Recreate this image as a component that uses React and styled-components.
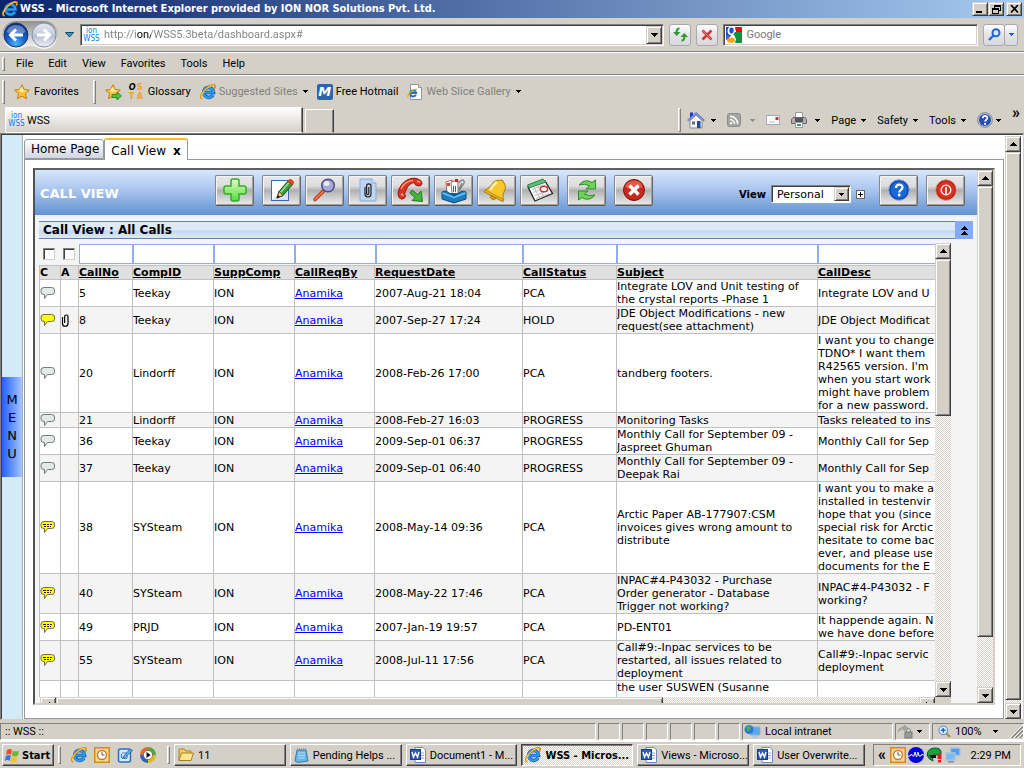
import React from "react";
import styled, { createGlobalStyle, css } from "styled-components";

const ui = `Roboto, "Liberation Sans", sans-serif`;
const uiBold = `"DejaVu Sans Condensed", "DejaVu Sans", sans-serif`;
const web = `"DejaVu Sans", Verdana, sans-serif`;
const face = "#d4d0c8";

const Global = createGlobalStyle`
  *, *::before, *::after { box-sizing: border-box; }
  html, body { margin: 0; height: 100%; }
  body { background: ${face}; font: 11px/13px ${ui}; color: #000; }
  button, input, select { font: inherit; color: inherit; margin: 0; padding: 0; border-radius: 0; }
  button { background: none; border: 0; }
  svg { display: block; flex: none; }
  a { color: inherit; text-decoration: none; }
`;

const raised = css`
  background: ${face};
  border: 1px solid;
  border-color: ${face} #404040 #404040 ${face};
  box-shadow: inset 1px 1px #fff, inset -1px -1px #808080;
`;
const hatch = css`
  background: repeating-conic-gradient(#fff 0 25%, ${face} 0 50%) 0 0 / 2px 2px;
`;

/* ---------- icons ---------- */

const Arrow = ({ dir = "down", color = "#000", size = 7 }) => (
  <svg width={size} height={size} viewBox="0 0 7 7" shapeRendering="crispEdges" aria-hidden="true"
    transform={`rotate(${{ down: 0, up: 180, left: 90, right: 270 }[dir]})`}>
    <path d="M0 2h7v1h-1v1h-1v1h-1v1h-1v-1h-1v-1h-1v-1h-1z" fill={color} />
  </svg>
);
const SmallArrow = ({ color = "#000" }) => (
  <svg width="5" height="3" viewBox="0 0 5 3" shapeRendering="crispEdges" aria-hidden="true">
    <path d="M0 0h5v1h-1v1h-1v1h-1v-1h-1v-1h-1z" fill={color} />
  </svg>
);

const IeLogo = ({ size = 16 }) => (
  <svg width={size} height={size} viewBox="0 0 16 16" aria-hidden="true">
    <path d="M13 10.800a5 5 0 1 1 .6-2.300H4.200" fill="none" stroke="#1458b0" strokeWidth="3.600" />
    <path d="M12.900 10.700a5 5 0 1 1 .5-2.200H4.200" fill="none" stroke="#2c9cec" strokeWidth="2.200" />
    <path d="M2.400 14.800C-.8 14 1.500 8.500 6 4.600 10 1 14.300-.2 15 1.800c.3.900-.2 2-.9 3" fill="none" stroke="#d98f10" strokeWidth="1.800" />
    <path d="M2.200 14.400C.2 13 2.500 8.300 6.300 4.900 9.800 1.800 13.600.3 14.500 2" fill="none" stroke="#ffd84d" strokeWidth="1" />
  </svg>
);

const NavOrbs = () => (
  <svg width="56" height="28" viewBox="0 0 56 28" aria-hidden="true">
    <defs>
      <radialGradient id="orbB" cx=".5" cy=".85" r=".8"><stop offset="0" stopColor="#48b4f4" /><stop offset=".5" stopColor="#1a5fc4" /><stop offset="1" stopColor="#0d2f86" /></radialGradient>
      <linearGradient id="orbG" x2="0" y2="1"><stop offset="0" stopColor="#e4e9f2" /><stop offset=".48" stopColor="#c4cdde" /><stop offset=".5" stopColor="#b0bbd2" /><stop offset="1" stopColor="#eef2f8" /></linearGradient>
      <linearGradient id="pill" x2="0" y2="1"><stop offset="0" stopColor="#8f8f8f" /><stop offset=".5" stopColor="#c9c9c6" /><stop offset="1" stopColor="#f8f8f8" /></linearGradient>
    </defs>
    <path d="M14 0h28a14 14 0 0 1 0 28c-6 0-8-3-14-3s-8 3-14 3a14 14 0 0 1 0-28z" fill="url(#pill)" />
    <circle cx="14" cy="14" r="12" fill="url(#orbB)" stroke="#173a80" />
    <path d="M4.500 11a10 10 0 0 1 19 0c-5 3-14 3-19 0z" fill="#fff" opacity=".35" />
    <path d="M21 14H9m5-5.500L8.500 14l5.500 5.500" fill="none" stroke="#fff" strokeWidth="3" />
    <circle cx="42" cy="14" r="12" fill="url(#orbG)" stroke="#8590a8" />
    <path d="M35 14h12m-5-5.500l5.500 5.500-5.500 5.500" fill="none" stroke="#fff" strokeWidth="3" />
  </svg>
);

const RefreshArrows = () => (
  <svg width="15" height="15" viewBox="0 0 15 15" aria-hidden="true">
    <path d="M6.500 1.500C4 1.500 3.500 3 3.500 6" fill="none" stroke="#2f9a2c" strokeWidth="2" />
    <path d="M0 5h7.500L3.700 9z" fill="#2f9a2c" />
    <path d="M8.500 13.500c2.500 0 3-1.500 3-4.500" fill="none" stroke="#2f9a2c" strokeWidth="2" />
    <path d="M7.500 10H15L11.300 6z" fill="#2f9a2c" />
  </svg>
);
const StopCross = () => (
  <svg width="12" height="12" viewBox="0 0 12 12" aria-hidden="true">
    <path d="M1.500 1.500l9 9m0-9l-9 9" stroke="#c43c3c" strokeWidth="2.600" />
    <path d="M1.500 1.500l9 9" stroke="#e87c7c" strokeWidth="1" />
  </svg>
);
const GoogleMark = () => (
  <svg width="16" height="16" viewBox="0 0 16 16" aria-hidden="true">
    <path d="M9 0h7v5H10z" fill="#e01010" />
    <path d="M9 5h7v11H9l1-4-3-5z" fill="#109040" />
    <path d="M0 0h3v6l3 3H0z" fill="#1048c0" /><path d="M0 8l5 1-1 3-4 1z" fill="#3a68d0" />
    <ellipse cx="5" cy="4" rx="3.500" ry="4" fill="#fff" /><ellipse cx="5.500" cy="3.500" rx="2.200" ry="3" fill="#1a50d0" />
    <path d="M6 7l3 2-2 3-4-1z" fill="#fff" />
    <ellipse cx="5" cy="13.200" rx="4" ry="2.600" fill="#f8a810" />
  </svg>
);
const BlueLens = () => (
  <svg width="13" height="13" viewBox="0 0 13 13" aria-hidden="true">
    <circle cx="8" cy="4.700" r="3.500" fill="#d8e8fc" stroke="#2268d0" strokeWidth="2" />
    <path d="M5.500 7.500L1 12" stroke="#2268d0" strokeWidth="2.400" />
  </svg>
);
const Star = ({ add }) => (
  <svg width="17" height="16" viewBox="0 0 17 16" aria-hidden="true">
    <path d="M8 .8l2.200 4.700 5.100.6-3.800 3.500 1 5.100L8 12.200l-4.500 2.500 1-5.100L.7 6.100l5.100-.6z" fill="#fdc13a" stroke="#c47a10" />
    <path d="M8 2.500l1.500 3.700 4 .5L8 8 4.500 7z" fill="#ffeb9a" />
    {add && <path d="M7 10.500h5V8l4.500 4-4.500 4v-2.500H7z" fill="#52c048" stroke="#1e7f1c" strokeWidth=".8" />}
  </svg>
);
const PageE = () => (
  <svg width="16" height="16" viewBox="0 0 16 16" aria-hidden="true">
    <path d="M3.500.5h8l3 3v12h-11z" fill="#fff" stroke="#9090a0" />
    <path d="M11.500.5v3h3" fill="#ddd" stroke="#9090a0" />
    <path d="M8.800 10.800a3 3 0 1 1 .3-1.900H3" fill="none" stroke="#1c72cc" strokeWidth="2" />
    <path d="M1 13.500C0 11 5 5 10 5" fill="none" stroke="#e8a020" strokeWidth="1.200" />
  </svg>
);
const House = () => (
  <svg width="18" height="17" viewBox="0 0 18 17" aria-hidden="true">
    <path d="M3 8.500L9 3l6 5.500V16H3z" fill="#f4f4f4" stroke="#8a8a92" />
    <path d="M.8 8.800L9 1.300l8.200 7.500" fill="none" stroke="#5a78c8" strokeWidth="2" />
    <path d="M.8 8.800L9 1.300l8.200 7.500" fill="none" stroke="#c8d8f8" strokeWidth=".8" strokeDasharray="1 1" />
    <path d="M3 .5h3V3L3 5.500z" fill="#2038c0" />
    <path d="M10 9h3.500v7H10z" fill="#1c4a9c" /><path d="M5 9.500h3v3H5z" fill="#6a6a70" />
  </svg>
);
const Rss = () => (
  <svg width="14" height="14" viewBox="0 0 14 14" aria-hidden="true">
    <rect x=".5" y=".5" width="13" height="13" rx="2" fill="#a4a4a0" stroke="#8c8c88" />
    <circle cx="4" cy="10.300" r="1.200" fill="#fff" />
    <path d="M3 6.500a4.500 4.500 0 0 1 4.500 4.500M3 3.300a7.700 7.700 0 0 1 7.700 7.700" fill="none" stroke="#fff" strokeWidth="1.400" />
  </svg>
);
const Mail = () => (
  <svg width="14" height="10" viewBox="0 0 14 10" aria-hidden="true">
    <rect x=".5" y=".5" width="13" height="9" fill="#fff" stroke="#a8a8b4" />
    <path d="M9.500 2h3v3h-3z" fill="#d03030" /><path d="M3 7h6" stroke="#b8b8c4" />
  </svg>
);
const Printer = () => (
  <svg width="16" height="16" viewBox="0 0 16 16" aria-hidden="true">
    <path d="M4.500.5h7V6h-7z" fill="#fff" stroke="#9a9a9a" />
    <path d="M2 5.500h12l1.500 2v4H.5v-4z" fill="#b0b0b4" stroke="#66666c" />
    <path d="M4 6h8v4H4z" fill="#55555c" /><path d="M4.500 10.500h7v5h-7z" fill="#fff" stroke="#9a9a9a" />
    <path d="M6 12h2v2H6z" fill="#38a058" /><path d="M8 12h2v2H8z" fill="#3878c8" />
  </svg>
);
const HelpBall = ({ size = 16 }) => (
  <svg width={size} height={size} viewBox="0 0 16 16" aria-hidden="true">
    <circle cx="8" cy="8" r="7.400" fill="#c0c4d0" stroke="#8a8a94" />
    <circle cx="8" cy="8" r="6" fill="#2450b4" />
    <path d="M5.800 6.200c0-3 4.600-3 4.600-.2 0 1.700-2.300 1.700-2.300 3.600" fill="none" stroke="#fff" strokeWidth="1.800" />
    <circle cx="8.100" cy="11.900" r="1.100" fill="#fff" />
  </svg>
);

const Plus = () => (
  <svg width="26" height="26" viewBox="0 0 26 26" aria-hidden="true">
    <defs><linearGradient id="plusFill" x2="0" y2="1"><stop offset="0" stopColor="#e8fbc8" /><stop offset="1" stopColor="#4fdc3c" /></linearGradient></defs>
    <path d="M11 2h4q2 0 2 2v5h5q2 0 2 2v4q0 2-2 2h-5v5q0 2-2 2h-4q-2 0-2-2v-5H4q-2 0-2-2v-4q0-2 2-2h5V4q0-2 2-2z" fill="url(#plusFill)" stroke="#2fae28" strokeWidth="1.500" />
  </svg>
);
const Edit = () => (
  <svg width="26" height="26" viewBox="0 0 26 26" aria-hidden="true">
    <rect x="2.500" y="3.500" width="17" height="20" fill="#fff" stroke="#3c6cb8" />
    <path d="M3 23h16V7z" fill="#d8e4f6" />
    <path d="M8 21l2-6.500L19 4l4.500 3.500L14 18.500z" fill="#3c9c3c" stroke="#174a17" />
    <path d="M11.500 15.500L20 5.500" stroke="#a0e090" strokeWidth="1.500" />
    <path d="M8 21l2-6.500 4 4z" fill="#f4cc80" stroke="#403010" strokeWidth=".8" /><path d="M8 21l.8-3 2 1.800z" fill="#111" />
    <path d="M18.500 4.500Q20.500 1.500 22.500 2.700L24.500 4.500Q25 6.500 23.500 8z" fill="#e84820" stroke="#a82810" strokeWidth=".6" />
  </svg>
);
const Lens = () => (
  <svg width="26" height="26" viewBox="0 0 26 26" aria-hidden="true">
    <path d="M11 14.500L3 22.500" stroke="#b83010" strokeWidth="3.600" strokeLinecap="round" />
    <path d="M11 14.500L3 22.500" stroke="#f88058" strokeWidth="1.600" strokeLinecap="round" />
    <circle cx="16" cy="8.500" r="6.300" fill="#a8a8d8" stroke="#4c4c84" strokeWidth="1.500" />
    <ellipse cx="14.500" cy="6.500" rx="3" ry="2.500" fill="#e8e8fc" />
  </svg>
);
const ClipDoc = () => (
  <svg width="26" height="26" viewBox="0 0 26 26" aria-hidden="true">
    <path d="M5 2h12l4 4v18H5z" fill="#bed4f0" stroke="#88a8d4" /><path d="M17 2v4h4" fill="#e8f0fa" stroke="#88a8d4" />
    <path d="M10 10v7a3 3 0 0 0 6 0V9a2.200 2.200 0 0 0-4.400 0v7.500a1 1 0 0 0 2.200 0V10" fill="none" stroke="#222" strokeWidth="1.200" />
  </svg>
);
const Phone = () => (
  <svg width="28" height="26" viewBox="0 0 28 26" aria-hidden="true">
    <path d="M7.500 17q2 1.500 0 4-3 2.500-5.500-.5Q0 17 2 12 6 3.500 14 1.500q3-1 7 .5 4 1.500 4 4.500-.5 2.500-3 2.500-4 0-5-3.500-5 1-7.500 6.500Q8 15 7.500 17z" fill="#dc3420" stroke="#94180c" />
    <path d="M4 12C6 7 11 3.500 16 3.500" fill="none" stroke="#ff9c84" strokeWidth="1.500" />
    <path d="M4 18q2-2 2 1M20 4.500q2-.5 3 1" fill="none" stroke="#ffb4a0" strokeWidth="1.300" />
    <path d="M15 13l5.500 4.500L24 14l1.500 10.500L15 23.500l3-3-5-4.500z" fill="#42b43c" stroke="#1c7a1a" />
  </svg>
);
const Inbox = () => (
  <svg width="28" height="27" viewBox="0 0 28 27" aria-hidden="true">
    <path d="M6 5l6-2 1 14H7z" fill="#fff" stroke="#a04050" strokeWidth=".8" /><path d="M7 6h3v3H7z" fill="#e03c3c" />
    <path d="M11 5l7-2v14h-6z" fill="#fafaff" stroke="#556" strokeWidth=".8" />
    <path d="M19 6q3-5 5-2 1 2-2 5l-3 5M22 6l-3 6" fill="none" stroke="#777" strokeWidth="1.200" /><path d="M15 2h3v3h-3z" fill="#c22" />
    <path d="M13.500 9v6M15.500 9v6" stroke="#5050c0" strokeWidth="1" />
    <path d="M2 15l4-1 8 5 8-5 4 1v7l-12 4L2 22z" fill="#1c7cc0" stroke="#0c4c80" />
    <path d="M2.500 16L14 20.500 25.500 16" fill="none" stroke="#6cc4f4" strokeWidth="1.500" />
    <path d="M11 17.500l3 2 3-2V16h-6z" fill="#0c5c98" />
  </svg>
);
const Bell = () => (
  <svg width="26" height="26" viewBox="0 0 26 26" aria-hidden="true">
    <g transform="rotate(28 13 13)">
      <path d="M11 3q2-2 4 0 5 2 5 8 .5 5 3.500 7.500v2h-21v-2Q5 16 6 11q0-6 5-8z" fill="#f6c82c" stroke="#b08010" />
      <path d="M9 6q-2 4-2 10" fill="none" stroke="#fff4b0" strokeWidth="2.400" />
      <path d="M3 18.500h20" stroke="#b88810" /><path d="M10 20.500h6q0 3-3 3t-3-3z" fill="#d89a10" stroke="#a07008" strokeWidth=".7" />
    </g>
  </svg>
);
const Calendar = () => (
  <svg width="28" height="26" viewBox="0 0 28 26" aria-hidden="true">
    <path d="M2 10L19 4l7.500 12.500L9 24z" fill="#f8f8f8" stroke="#222" strokeWidth="1.300" />
    <path d="M1.500 8L17 2l3 3L3 11z" fill="#5cc078" stroke="#2c8048" />
    <path d="M6 12.500l11-4.500M7.500 15.500l7-3M9 18.500l13-5M10 21.500l13-5M8 10.500l6 11M12 9l6 11" stroke="#b0b0b0" strokeWidth=".8" />
    <ellipse cx="18" cy="12" rx="3.600" ry="2.800" fill="#fff" stroke="#d03030" strokeWidth="1.400" />
  </svg>
);
const Recycle = () => (
  <svg width="24" height="26" viewBox="0 0 24 26" aria-hidden="true">
    <path d="M4 8Q10 1 17 5.500L20.500 3v9H11l3.500-3Q10 6 4 8z" fill="#6cd458" stroke="#2c8c28" />
    <path d="M20 18q-6 7-13 2.500L3.500 23v-9H13l-3.500 3q4.500 3 10.500 1z" fill="#6cd458" stroke="#2c8c28" />
  </svg>
);
const CancelBall = () => (
  <svg width="26" height="26" viewBox="0 0 26 26" aria-hidden="true">
    <circle cx="13" cy="13" r="10.500" fill="#c82820" stroke="#7c100c" />
    <path d="M4 10a9.500 9.500 0 0 1 18 0q-9 5-18 0z" fill="#f07860" opacity=".6" />
    <path d="M8.500 8.500l9 9m0-9l-9 9" stroke="#fff" strokeWidth="3.400" />
  </svg>
);
const BigHelp = () => (
  <svg width="24" height="24" viewBox="0 0 24 24" aria-hidden="true">
    <circle cx="12" cy="12" r="10.300" fill="#0c48a8" stroke="#88a8dc" />
    <circle cx="12" cy="12" r="8.500" fill="#1c68d4" />
    <path d="M9 10c0-4.500 6.500-4.200 6.500-.6 0 2.400-3.300 2.400-3.300 5" fill="none" stroke="#fff" strokeWidth="2.200" />
    <circle cx="12.200" cy="17" r="1.400" fill="#fff" />
  </svg>
);
const Power = () => (
  <svg width="24" height="24" viewBox="0 0 24 24" aria-hidden="true">
    <circle cx="12" cy="12" r="10.300" fill="#b01c10" stroke="#e09080" />
    <circle cx="12" cy="12" r="8.700" fill="#dc3020" />
    <circle cx="12" cy="12" r="4.800" fill="none" stroke="#fff" strokeWidth="1.300" />
    <path d="M12 9v7" stroke="#fff" strokeWidth="1.600" />
  </svg>
);

const Bubble = ({ kind }) => (
  <svg width="15" height="13" viewBox="0 0 15 13" role="img" aria-label="comment">
    <path d="M4 .5h7.500q3 0 3 2.500v2q0 2.500-3 2.500H7.500L4.500 11.500v-4H4Q1 7.500 1 5V3Q1 .5 4 .5z"
      fill={kind === "none" ? "#e8e8e4" : "#ffff00"} stroke={kind === "none" ? "#6c7c80" : "#70704c"} />
    {kind === "lines" && <path d="M3 3.500h3m1 0h2m1 0h2M4 5.500h2m1 0h2m1 0h1" stroke="#222" shapeRendering="crispEdges" />}
  </svg>
);
const Clip = () => (
  <svg width="9" height="13" viewBox="0 0 9 13" role="img" aria-label="attachment">
    <path d="M1.500 3v6.500a2.700 2.700 0 0 0 5.500 0V2.700a1.700 1.700 0 0 0-3.400 0V9" fill="none" stroke="#000" strokeWidth="1.200" />
  </svg>
);
const Collapse = () => (
  <svg width="7" height="9" viewBox="0 0 7 9" shapeRendering="crispEdges" aria-hidden="true">
    <path d="M3 0h1v1h1v1h1v1h1v1H0V3h1V2h1V1h1zM3 5h1v1h1v1h1v1h1v1H0V8h1V7h1V6h1z" fill="#000" />
  </svg>
);

const Globe = () => (
  <svg width="17" height="16" viewBox="0 0 17 16" aria-hidden="true">
    <rect x="6" y="3" width="10" height="8" rx="1" fill="#58a8f0" stroke="#9ab" /><path d="M8 12h6l1 2.500H7z" fill="#b8c8d8" />
    <circle cx="5" cy="5.500" r="4.500" fill="#2c78d8" /><path d="M2 3q4-3 5 1L4 8z" fill="#3cb84c" />
  </svg>
);
const Lock = () => (
  <svg width="16" height="14" viewBox="0 0 16 14" aria-hidden="true">
    <path d="M1 7q1-5 6-5V0l4 3-4 3V4Q3 4 1 7z" fill="#a8a8a4" stroke="#888" strokeWidth=".5" />
    <rect x="8" y="7" width="7" height="6" fill="#9a9a98" stroke="#777" /><path d="M9.500 7V5.500a2 2 0 0 1 4 0V7" fill="none" stroke="#888" />
  </svg>
);
const ZoomLens = () => (
  <svg width="13" height="13" viewBox="0 0 13 13" aria-hidden="true">
    <path d="M8 8l4 4" stroke="#b08850" strokeWidth="2.400" />
    <circle cx="5.300" cy="5.300" r="4.300" fill="#d8ecfc" stroke="#4c88cc" />
    <path d="M3 5.300h4.600M5.300 3v4.600" stroke="#2060c0" strokeWidth="1.400" />
  </svg>
);
const SizeGrip = () => (
  <svg width="13" height="13" viewBox="0 0 13 13" aria-hidden="true">
    <path d="M0 13L13 0M4 13l9-9M8 13l5-5" stroke="#fff" /><path d="M1.500 13L13 1.500M5.500 13L13 5.500M9.500 13L13 9.500" stroke="#808080" strokeWidth="1.300" />
  </svg>
);
const Flag = () => (
  <svg width="17" height="15" viewBox="0 0 17 15" aria-hidden="true">
    <path d="M3 2q3-2 5 0L7 7Q4.500 5 2 7z" fill="#e8502c" /><path d="M9 2.500q3 2 6 0L14 7.500q-3 2-6 0z" fill="#68b830" />
    <path d="M1.800 8q2.500-2 5 0l-1 5q-2.500-2-5 0z" fill="#3c78dc" /><path d="M7.700 8.500q3 2 6 0l-1 5q-3 2-6 0z" fill="#f8c020" />
  </svg>
);
const Outlook = () => (
  <svg width="16" height="16" viewBox="0 0 16 16" aria-hidden="true">
    <rect x=".75" y=".75" width="14.500" height="14.500" fill="#f8d898" stroke="#d88818" strokeWidth="1.500" />
    <circle cx="8" cy="8" r="4.500" fill="#fff" stroke="#c08030" strokeWidth="1.400" /><path d="M8 5v3h2.500" fill="none" stroke="#805020" />
  </svg>
);
const Desk = () => (
  <svg width="16" height="16" viewBox="0 0 16 16" aria-hidden="true">
    <rect x="1.500" y="2" width="12" height="13" rx="2" fill="#d4e8fc" stroke="#2c70bc" strokeWidth="1.500" />
    <path d="M5 6h5M5 11.500h5M4.500 7v4M10 8v3" stroke="#3c80c8" strokeWidth="1.200" /><path d="M6.500 9.500L13 2l2.500 1.500-7 6.500-2.500.8z" fill="#58b0f0" stroke="#205c9c" strokeWidth=".8" />
  </svg>
);
const Player = () => (
  <svg width="16" height="16" viewBox="0 0 16 16" aria-hidden="true">
    <path d="M8 8V0a8 8 0 0 0-8 8z" fill="#e86830" /><path d="M8 8V0a8 8 0 0 1 8 8z" fill="#58a838" />
    <path d="M8 8h8a8 8 0 0 1-8 8z" fill="#e8b820" /><path d="M8 8H0a8 8 0 0 0 8 8z" fill="#2c64c0" />
    <circle cx="8" cy="8" r="4.600" fill="#fff" stroke="#445" strokeWidth=".6" /><path d="M6.500 5l4.200 3-4.200 3z" fill="#112" />
  </svg>
);
const Folder = () => (
  <svg width="16" height="14" viewBox="0 0 16 14" aria-hidden="true">
    <path d="M1 12.500V2q0-1 1-1h4l2 2h5v2" fill="#f4d060" stroke="#a88020" /><path d="M1 12.500L3.500 5H15.500L13 12.500z" fill="#fce890" stroke="#a88020" />
  </svg>
);
const Notepad = () => (
  <svg width="15" height="15" viewBox="0 0 15 15" aria-hidden="true">
    <path d="M3 2h9l2 11-10 1.500L1 13z" fill="#68b4e4" stroke="#387cac" /><path d="M4 5h7M4 7.500h7M4 10h7" stroke="#b8e0f8" />
    <path d="M3 1.500h9" stroke="#888" strokeWidth="2" strokeDasharray="1 1" />
  </svg>
);
const WordIcon = () => (
  <svg width="16" height="16" viewBox="0 0 16 16" aria-hidden="true">
    <path d="M5 .5h8l2.500 2.500v12.500H5z" fill="#fff" stroke="#6c88bc" /><path d="M11 6h3M11 8.500h3M11 11h3" stroke="#88a4d4" />
    <rect x=".5" y="2.500" width="10" height="10" fill="#2c5cb4" stroke="#183c88" />
    <path d="M2 5l1.500 5L5.500 6l2 4L9 5" fill="none" stroke="#fff" strokeWidth="1.400" />
  </svg>
);
const Wave = () => (
  <svg width="16" height="16" viewBox="0 0 16 16" aria-hidden="true">
    <circle cx="8" cy="8" r="8" fill="#0000e8" /><path d="M0 9h2l1.500-2 1 2H6l1-4 1.500 5L10 5l1 4h2l1-2 1 1h1" fill="none" stroke="#f4f490" />
  </svg>
);
const Shield = () => (
  <svg width="17" height="16" viewBox="0 0 17 16" aria-hidden="true">
    <path d="M1 8Q2 1 9 1t6 6l-5 1q-3-1-4 1l1 5Q2 12 1 8z" fill="#1ca038" stroke="#053" /><path d="M3 8h7v3H5z" fill="#111" />
    <path d="M11.500 7h4v5h-4zM12 13h3v2.500h-3z" fill="#d82020" />
  </svg>
);
const Screens = () => (
  <svg width="16" height="16" viewBox="0 0 16 16" aria-hidden="true">
    <rect x="5.500" y="1" width="9.500" height="7.500" fill="#4c9cf0" stroke="#a8c4dc" strokeWidth="1.500" />
    <rect x="1" y="6" width="9" height="7" fill="#78b8f8" stroke="#a8c4dc" strokeWidth="1.500" /><path d="M3 14h6v1.500H3z" fill="#88a" />
  </svg>
);

/* ---------- window chrome ---------- */

const Window = styled.div`
  height: 100vh; min-height: 480px; display: flex; flex-direction: column; overflow: hidden; background: ${face};
`;
const TitleBar = styled.header`
  flex: 0 0 18px; display: flex; align-items: center; gap: 2px; padding: 0 2px; color: #fff;
  background: linear-gradient(90deg, #0a246a, #a6caf0); font: bold 11px/16px ${uiBold};
  h1 { margin: 0; flex: 1; font: inherit; white-space: nowrap; }
`;
const Caption = styled.div`display: flex;`;
const CaptionButton = styled.button`
  ${raised} width: 16px; height: 14px; display: grid; place-items: center;
  &:last-child { margin-left: 2px; }
`;
const NavBar = styled.div`
  flex: 0 0 33px; display: flex; align-items: center; gap: 5px; padding: 0 6px 0 2px;
`;
const OrbButton = styled.button`width: 56px; height: 28px;`;
const RecentButton = styled.button`width: 12px; height: 20px; display: grid; place-items: center;`;
const Field = styled.div`
  display: flex; align-items: center; height: 22px; background: #fff; border: 1px solid;
  border-color: #808080 #fff #fff #808080; box-shadow: inset 1px 1px #404040, inset -1px -1px ${face};
  flex: ${(p) => p.$grow} 1 0; min-width: 0; padding: 2px 1px 2px 2px; gap: 4px;
  input { flex: 1; min-width: 0; border: 0; outline: 0; background: none; color: #777; font: 11px/16px ${ui}; }
  input::placeholder { color: #777; opacity: 1; }
`;
const AddressInput = styled.input.attrs({ "aria-label": "Address" })`
  && {
    background: linear-gradient(90deg, #808080 0 32px, #000 32px 47px, #808080 47px) no-repeat;
    -webkit-background-clip: text; background-clip: text; -webkit-text-fill-color: transparent;
  }
`;
const DropButton = styled.button`${raised} width: 16px; height: 18px; flex: none; display: grid; place-items: center;`;
const SoftButton = styled.button`
  width: ${(p) => p.$w || 22}px; height: 22px; display: grid; place-items: center; flex: none;
  border: 1px solid #a8a8b0; border-radius: 3px; background: linear-gradient(#fdfdfd, #e4e4e8 50%, #d8d8de);
`;
const SearchGroup = styled.div`
  display: flex;
  ${SoftButton} + ${SoftButton} { margin-left: -1px; }
`;
const Rule = styled.div`flex: 0 0 2px; background: linear-gradient(#808080 50%, #fff 50%);`;
const Grip = styled.span`
  flex: none; width: 3px; height: ${(p) => p.$h || 14}px; border: 1px solid; border-color: #fff #808080 #808080 #fff;
`;
const MenuBar = styled.nav`
  flex: 0 0 21px; display: flex; align-items: center; gap: 1px; padding-left: 2px;
  button { padding: 0 7px; line-height: 18px; }
  ${Grip} { margin-right: 3px; }
`;
const LinksBar = styled.nav`flex: 0 0 31px; display: flex; align-items: center; padding-left: 2px;`;
const FavButton = styled.button`
  display: flex; align-items: center; gap: 3px; margin: 0 ${(p) => p.$after}px 0 9px;
`;
const QuickLink = styled.a`
  display: flex; align-items: center; gap: 3px; margin-right: 9px; white-space: nowrap; color: ${(p) => (p.$dim ? "#808080" : "#000")};
  svg:last-child:not(:first-child) { margin-left: 2px; }
`;
const LetterMark = styled.span`
  display: grid; grid-template-columns: 8px 8px; flex: none; width: 16px; font: bold 9px/9px ${uiBold}; color: #f0a030;
  i { color: #000; }
`;
const SiteMark = styled.span`
  flex: none; width: 17px; font: 8px/8px ${uiBold}; color: #0080f0; text-align: center;
  span { display: block; }
`;
const HotMark = styled.span`
  width: 16px; height: 16px; display: grid; place-items: center; background: #2c64b0; border-radius: 2px; color: #fff;
  font: italic bold 13px/16px ${web};
`;
const TabBar = styled.div`flex: 0 0 26px; display: flex; align-items: flex-end; padding: 0 4px 0 5px;`;
const BrowserTab = styled.a`
  flex: 0 1 298px; height: 26px; display: flex; align-items: center; gap: 2px; padding-left: 2px;
  border: 1px solid; border-color: #fff #404040 transparent #fff; box-shadow: inset -1px 0 #808080;
  background: linear-gradient(#fff, ${face});
`;
const NewTab = styled.button`
  width: 29px; height: 24px; margin-left: 2px; border: 1px solid; border-color: #fff #404040 transparent #fff; box-shadow: inset -1px 0 #808080;
`;
const Commands = styled.div`
  margin-left: auto; display: flex; align-items: center; height: 26px; gap: 11px; flex: none;
  ${Grip} { margin-right: -5px; }
`;
const Command = styled.button`
  display: flex; align-items: center; gap: ${(p) => p.$gap || 5}px; white-space: nowrap;
`;
const Overflow = styled.button`align-self: flex-start; font: bold 16px/12px ${ui}; color: #000;`;

/* ---------- page ---------- */

const Viewport = styled.main`
  flex: 1; min-height: 0; display: flex; background: #fff; border: 1px solid; border-color: #808080 ${face} ${face} #808080;
  box-shadow: inset 1px 1px #404040; padding: 2px 2px 0 1px; font: 11px/13px ${web};
`;
const MenuStrip = styled.aside`
  flex: 0 0 21px; display: flex; align-items: center; margin-top: -1px; background: #d2ebf7; border-right: 1px solid #a8b0b4;
`;
const MenuHandle = styled.button`
  width: 20px; height: 100px; background: linear-gradient(90deg, #2060ff, #a8c4ff); font: 13px/18px ${web};
  span { display: block; }
`;
const Page = styled.div`flex: 1; min-width: 0; display: flex; flex-direction: column; padding: 2px 1px 0 1px;`;
const Tabs = styled.div`display: flex; align-items: flex-end; height: 21px; flex: none;`;
const PageTab = styled.a`
  height: ${(p) => (p.$on ? 22 : 20)}px; margin-bottom: ${(p) => (p.$on ? -1 : 0)}px; position: relative;
  display: flex; align-items: center; gap: 7px; padding: 0 ${(p) => (p.$on ? 6 : 4)}px 0 6px; white-space: nowrap; font: 12px/14px ${web};
  border: 1px solid #919b9c; border-bottom-width: ${(p) => (p.$on ? 0 : 1)}px; border-radius: 3px 3px 0 0;
  background: ${(p) => (p.$on ? "#fff" : "linear-gradient(#fff, #d4d4e4)")};
  ${(p) => p.$on && css`border-top: 2px solid #ffb72c; padding-top: 2px;`}
  button { font: bold 12px/12px ${web}; }
`;
const Panel = styled.section`
  flex: 1; min-height: 0; display: flex; border: 1px solid #919b9c; padding: 8px 8px 13px 8px;
`;
const Frame = styled.div`
  flex: 1; min-width: 0; display: flex; border: 2px solid; border-color: #606060 ${face} ${face} #505050; background: #f4f4f4;
`;
const Work = styled.div`flex: 1; min-width: 0; display: flex; flex-direction: column;`;
const Header = styled.div`
  flex: 0 0 47px; display: flex; align-items: center; padding: 0 12px 5px 5px; border-bottom: 2px solid #e8f0fc;
  background: linear-gradient(#d8e7fb, #a8c4ee 45%, #6292d0);
  h2 { flex: 0 0 175px; margin: 0; color: #fff; font: bold 13px/16px ${web}; padding-top: 8px; }
`;
const Tools = styled.div`display: flex; gap: 4px;`;
const ToolButton = styled.button`
  width: 39px; height: 31px; display: grid; place-items: center; border: 1px solid; border-color: #888 #686868 #585858 #888;
  border-radius: 2px; box-shadow: inset 1px 1px #f4f4f4, inset -1px -1px #a0a0a0;
  background: linear-gradient(#e8e8e8, #dcdcdc 35%, #b0b0b0 50%, #c4c4c4 65%, #ececec);
  margin-left: ${(p) => (p.$apart ? 4 : 0)}px;
`;
const ViewPicker = styled.div`
  margin-left: auto; margin-right: 14px; display: flex; align-items: center; gap: 5px; padding-top: 8px;
  label { font: bold 10px/13px ${web}; }
`;
const Select = styled.span`
  display: flex; width: 80px; height: 18px; background: #fff; border: 1px solid; border-color: #808080 #fff #fff #808080;
  box-shadow: inset 1px 1px #404040; padding: 1px;
  select { appearance: none; flex: 1; min-width: 0; border: 0; outline: 0; background: none; padding-left: 4px; font: 11px/13px ${web}; }
  span { ${raised} width: 15px; display: grid; place-items: center; pointer-events: none; }
`;
const PlusBox = styled.button`
  width: 9px; height: 9px; border: 1px solid #666; background: #fff; display: grid; place-items: center;
`;
const Section = styled.div`
  flex: 0 0 18px; margin: 4px 4px 4px 4px; display: flex;
  h3 { flex: 1; margin: 0; padding-left: 4px; font: bold 12px/16px ${web}; border: 1px solid #5c84b4; border-width: 1px 0;
    background: linear-gradient(#e0eaf6, #dce8f6 50%, #c4d8ee 55%, #dce8f4); }
  button { width: 18px; background: #84aaff; display: grid; place-items: center; }
`;
const GridArea = styled.div`flex: 1; min-height: 0; display: flex; margin: 0 26px 0 4px;`;
const GridView = styled.div`flex: 1; min-width: 0; overflow: hidden; padding-top: 1px;`;
const Filters = styled.div`
  display: flex; align-items: center; height: 20px; margin-bottom: 1px;
  input[type="text"] { flex: none; height: 20px; border: 1px solid #8eaee6; background: #fff; outline: 0; }
`;
const Check = styled.input.attrs({ type: "checkbox" })`
  appearance: none; flex: none; width: 12px; height: 12px; background: #fff; border: 1px solid; margin: 0 4px !important;
  border-color: #808080 ${face} ${face} #808080; box-shadow: inset 1px 1px #404040;
`;
const FilterInput = styled.input.attrs({ type: "text" })`width: ${(p) => p.$w}px;`;

const Calls = styled.table`
  table-layout: fixed; border-collapse: collapse; width: 1058px; background: #fff;
  th, td { border: 1px solid #c0c0c0; padding: 0; text-align: left; vertical-align: middle; white-space: pre; overflow: hidden; }
  th { background: #e0e0e0; font: bold 11px/13px ${web}; }
  th a { text-decoration: underline; }
  tbody tr:nth-child(even) td { background: #f4f4f4; }
  td { height: 15px; }
  td a { color: #0000ff; text-decoration: underline; }
  td svg { margin: -4px 0; }
`;
const LastRow = styled.tr`
  && td { height: 66px; vertical-align: top; }
`;

const Bar = styled.div`
  display: flex; flex: none; flex-direction: ${(p) => (p.$row ? "row" : "column")};
  ${(p) => (p.$row ? "height: 16px; flex: 1; min-width: 0;" : "width: 16px;")} ${hatch}
`;
const BarButton = styled.button`${raised} width: 16px; height: 16px; flex: none; display: grid; place-items: center;`;
const Thumb = styled.div`${raised} flex: ${(p) => p.$n} 1 0;`;
const Gap = styled.div`flex: ${(p) => p.$n} 1 0;`;
const Scroll = ({ row, thumb, gap }) => (
  <Bar $row={row}>
    <BarButton aria-label="back"><Arrow dir={row ? "left" : "up"} /></BarButton>
    <Thumb $n={thumb} /><Gap $n={gap} />
    <BarButton aria-label="forward"><Arrow dir={row ? "right" : "down"} /></BarButton>
  </Bar>
);
const CutRow = styled.div`
  flex: 0 0 6px; display: flex; align-items: flex-start; overflow: hidden; margin: 0 26px 0 5px; padding-right: 16px; background: ${face};
`;

/* ---------- bottom bars ---------- */

const StatusBar = styled.footer`
  flex: 0 0 21px; display: flex; gap: 2px; padding-top: 3px; border-bottom: 1px solid #fff;
`;
const Pane = styled.div`
  flex: ${(p) => (p.$w ? `0 0 ${p.$w}px` : "1")}; min-width: 0; height: 17px; display: flex; align-items: center; gap: 4px;
  padding-left: ${(p) => p.$pad || 1}px; border: 1px solid; border-color: #808080 #fff #fff #808080; white-space: nowrap;
`;
const TaskBar = styled.footer`
  flex: 0 0 27px; display: flex; align-items: center; gap: 4px; padding: 0 3px 0 2px; border-top: 1px solid #fff;
`;
const TaskButton = styled.button`
  flex: 1 1 0; min-width: 0; height: 22px; display: flex; align-items: center; gap: 4px; padding: 0 3px; background: ${face};
  border: 1px solid; border-color: #fff #404040 #404040 #fff; box-shadow: inset -1px -1px #808080; white-space: nowrap; overflow: hidden;
  ${(p) => p.$on && css`${hatch} font: bold 11px/13px ${uiBold}; border-color: #404040 #fff #fff #404040; box-shadow: inset 1px 1px #808080;`}
`;
const StartButton = styled(TaskButton)`flex: 0 0 52px; gap: 1px; padding: 0 1px; font: bold 11px/13px ${uiBold};`;
const QuickLaunch = styled.div`display: flex; gap: 7px; padding: 0 7px 0 6px; flex: none; button { display: block; }`;
const Tray = styled.div`
  flex: 0 0 148px; height: 22px; display: flex; align-items: center; gap: 2px; padding: 0 9px 0 4px; margin-left: 4px;
  border: 1px solid; border-color: #808080 #fff #fff #808080;
  time { margin-left: auto; }
  button { font: bold 16px/12px ${ui}; margin-right: 2px; }
`;

/* ---------- data ---------- */

const columns = [
  ["CallNo", 54], ["CompID", 81], ["SuppComp", 81], ["CallReqBy", 80], ["RequestDate", 148],
  ["CallStatus", 94], ["Subject", 201], ["CallDesc", 280],
];
const filterWidths = [54, 81, 81, 81, 147, 94, 201, 280];

const rows = [
  ["none", false, "5", "Teekay", "2007-Aug-21 18:04", "PCA", "Integrate LOV and Unit testing of\nthe crystal reports -Phase 1", "Integrate LOV and U"],
  ["full", true, "8", "Teekay", "2007-Sep-27 17:24", "HOLD", "JDE Object Modifications - new\nrequest(see attachment)", "JDE Object Modificat"],
  ["none", false, "20", "Lindorff", "2008-Feb-26 17:00", "PCA", "tandberg footers.", "I want you to change\nTDNO* I want them\nR42565 version. I'm\nwhen you start work\nmight have problem\nfor a new password."],
  ["none", false, "21", "Lindorff", "2008-Feb-27 16:03", "PROGRESS", "Monitoring Tasks", "Tasks releated to ins"],
  ["none", false, "36", "Teekay", "2009-Sep-01 06:37", "PROGRESS", "Monthly Call for September 09 -\nJaspreet Ghuman", "Monthly Call for Sep"],
  ["none", false, "37", "Teekay", "2009-Sep-01 06:40", "PROGRESS", "Monthly Call for September 09 -\nDeepak Rai", "Monthly Call for Sep"],
  ["lines", false, "38", "SYSteam", "2008-May-14 09:36", "PCA", "Arctic Paper AB-177907:CSM\ninvoices gives wrong amount to\ndistribute", "I want you to make a\ninstalled in testenvir\nhope that you (since\nspecial risk for Arctic\nhesitate to come bac\never, and please use\ndocuments for the E"],
  ["lines", false, "40", "SYSteam", "2008-May-22 17:46", "PCA", "INPAC#4-P43032 - Purchase\nOrder generator - Database\nTrigger not working?", "INPAC#4-P43032 - F\nworking?"],
  ["lines", false, "49", "PRJD", "2007-Jan-19 19:57", "PCA", "PD-ENT01", "It happende again. N\nwe have done before"],
  ["lines", false, "55", "SYSteam", "2008-Jul-11 17:56", "PCA", "Call#9:-Inpac services to be\nrestarted, all issues related to\ndeployment", "Call#9:-Inpac servic\ndeployment"],
];

const tools = [
  ["Add", Plus], ["Edit", Edit, true], ["Search", Lens], ["Attachments", ClipDoc], ["Call", Phone], ["Inbox", Inbox],
  ["Reminder", Bell], ["Calendar", Calendar], ["Refresh", Recycle, true], ["Cancel", CancelBall, true],
];
const tasks = [
  ["11", Folder], ["Pending Helps ...", Notepad], ["Document1 - M...", WordIcon], ["WSS - Micros...", IeLogo, true],
  ["Views - Microso...", WordIcon], ["User Overwrite...", WordIcon],
];

const Favicon = () => <SiteMark aria-hidden="true"><span>ion</span><span>WSS</span></SiteMark>;

export default function App() {
  return (
    <Window>
      <Global />
      <TitleBar>
        <IeLogo />
        <h1>WSS - Microsoft Internet Explorer provided by ION NOR Solutions Pvt. Ltd.</h1>
        <Caption>
          <CaptionButton aria-label="Minimize"><svg width="8" height="8" shapeRendering="crispEdges"><path d="M0 6h6v2H0z" /></svg></CaptionButton>
          <CaptionButton aria-label="Restore"><svg width="9" height="9" shapeRendering="crispEdges"><path d="M2.500 3V.5h6v5H6M2 1.500h7M.5 3.500h5.500v5H.5zM0 4.500h6" fill="none" stroke="#000" /></svg></CaptionButton>
          <CaptionButton aria-label="Close"><svg width="9" height="8"><path d="M1 0l7 7.500M8 0L1 7.500" stroke="#000" strokeWidth="1.700" /></svg></CaptionButton>
        </Caption>
      </TitleBar>
      <NavBar>
        <OrbButton aria-label="Back and forward"><NavOrbs /></OrbButton>
        <RecentButton aria-label="Recent pages"><svg width="9" height="6" viewBox="0 0 9 6"><path d="M.5.5h8L4.500 5z" fill="#28a0d0" stroke="#104868" /></svg></RecentButton>
        <Field $grow={585}>
          <Favicon />
          <AddressInput defaultValue="http://ion/WSS5.3beta/dashboard.aspx#" />
          <DropButton aria-label="Show addresses"><Arrow /></DropButton>
        </Field>
        <SoftButton aria-label="Refresh"><RefreshArrows /></SoftButton>
        <SoftButton aria-label="Stop"><StopCross /></SoftButton>
        <Field $grow={252}>
          <GoogleMark />
          <input aria-label="Search" placeholder="Google" />
        </Field>
        <SearchGroup>
          <SoftButton aria-label="Search"><BlueLens /></SoftButton>
          <SoftButton $w={14} aria-label="Search options"><SmallArrow color="#1060d0" /></SoftButton>
        </SearchGroup>
      </NavBar>
      <Rule />
      <MenuBar>
        <Grip />
        {["File", "Edit", "View", "Favorites", "Tools", "Help"].map((m) => <button key={m}>{m}</button>)}
      </MenuBar>
      <Rule />
      <LinksBar>
        <Grip $h={24} />
        <FavButton $after={14}><Star />Favorites</FavButton>
        <Grip $h={24} />
        <FavButton $after={7} aria-label="Add to favorites"><Star add /></FavButton>
        <QuickLink href="#"><LetterMark aria-hidden="true"><i>O</i><span>S</span><span>T</span><span>A</span></LetterMark>Glossary</QuickLink>
        <QuickLink href="#" $dim><IeLogo />Suggested Sites<SmallArrow /></QuickLink>
        <QuickLink href="#"><HotMark aria-hidden="true">M</HotMark>Free Hotmail</QuickLink>
        <QuickLink href="#" $dim><PageE />Web Slice Gallery<SmallArrow /></QuickLink>
      </LinksBar>
      <TabBar>
        <BrowserTab href="#"><Favicon />WSS</BrowserTab>
        <NewTab aria-label="New tab" />
        <Commands>
          <Grip $h={24} />
          <Command $gap={6} aria-label="Home"><House /><SmallArrow /></Command>
          <Command $gap={9} aria-label="Feeds"><Rss /><SmallArrow color="#909090" /></Command>
          <Command aria-label="Mail"><Mail /></Command>
          <Command $gap={8} aria-label="Print"><Printer /><SmallArrow /></Command>
          <Command>Page<SmallArrow /></Command>
          <Command>Safety<SmallArrow /></Command>
          <Command>Tools<SmallArrow /></Command>
          <Command $gap={3} aria-label="Help"><HelpBall /><SmallArrow /></Command>
          <Overflow aria-label="More">»</Overflow>
        </Commands>
      </TabBar>

      <Viewport>
        <MenuStrip>
          <MenuHandle>{"MENU".split("").map((c) => <span key={c}>{c}</span>)}</MenuHandle>
        </MenuStrip>
        <Page>
          <Tabs>
            <PageTab href="#">Home Page</PageTab>
            <PageTab as="div" $on>Call View <button aria-label="Close tab">x</button></PageTab>
          </Tabs>
          <Panel>
            <Frame>
              <Work>
                <Header>
                  <h2>CALL VIEW</h2>
                  <Tools>
                    {tools.map(([name, Icon, apart]) => <ToolButton key={name} aria-label={name} $apart={apart}><Icon /></ToolButton>)}
                  </Tools>
                  <ViewPicker>
                    <label htmlFor="view">View</label>
                    <Select><select id="view" defaultValue="Personal"><option>Personal</option></select><span><SmallArrow /></span></Select>
                    <PlusBox aria-label="Add view"><svg width="5" height="5" shapeRendering="crispEdges"><path d="M0 2h5v1H0zM2 0h1v5H2z" /></svg></PlusBox>
                  </ViewPicker>
                  <Tools>
                    <ToolButton aria-label="Help"><BigHelp /></ToolButton>
                    <ToolButton aria-label="Log out" $apart><Power /></ToolButton>
                  </Tools>
                </Header>
                <Section>
                  <h3>Call View : All Calls</h3>
                  <button aria-label="Collapse"><Collapse /></button>
                </Section>
                <GridArea>
                  <GridView>
                    <Filters>
                      <Check aria-label="Comments only" /><Check aria-label="Attachments only" />
                      {columns.map(([c], i) => <FilterInput key={c} aria-label={`Filter ${c}`} $w={filterWidths[i]} />)}
                    </Filters>
                    <Calls>
                      <colgroup>
                        <col width="21" /><col width="18" />
                        {columns.map(([c, w]) => <col key={c} width={w} />)}
                      </colgroup>
                      <thead>
                        <tr><th>C</th><th>A</th>{columns.map(([c]) => <th key={c}><a href="#">{c}</a></th>)}</tr>
                      </thead>
                      <tbody>
                        {rows.map(([kind, clip, no, comp, date, status, subject, desc]) => (
                          <tr key={no}>
                            <td><Bubble kind={kind} /></td>
                            <td>{clip && <Clip />}</td>
                            <td>{no}</td><td>{comp}</td><td>ION</td>
                            <td><a href="#">Anamika</a></td>
                            <td>{date}</td><td>{status}</td><td>{subject}</td><td>{desc}</td>
                          </tr>
                        ))}
                        <LastRow>
                          <td /><td /><td /><td /><td /><td /><td /><td />
                          <td>the user SUSWEN (Susanne</td><td />
                        </LastRow>
                      </tbody>
                    </Calls>
                  </GridView>
                  <Scroll thumb={156} gap={266} />
                </GridArea>
                <CutRow><Scroll row thumb={607} gap={257} /></CutRow>
              </Work>
              <Scroll thumb={451} gap={50} />
            </Frame>
          </Panel>
        </Page>
        <Scroll thumb={547} gap={3} />
      </Viewport>

      <StatusBar>
        <Pane $pad={4}>:: WSS ::</Pane>
        {[1, 2, 3, 4, 5, 6].map((n) => <Pane key={n} $w={22} />)}
        <Pane $w={151}><Globe />Local intranet</Pane>
        <Pane $w={35}><Lock /><SmallArrow /></Pane>
        <Pane $w={92} $pad={5}><ZoomLens />100%<Gap $n={1} /><SmallArrow /><Gap $n={1} /><SizeGrip /></Pane>
      </StatusBar>
      <TaskBar>
        <StartButton><Flag />Start</StartButton>
        <Grip $h={18} />
        <QuickLaunch>
          <button aria-label="Internet Explorer"><IeLogo /></button>
          <button aria-label="Outlook"><Outlook /></button>
          <button aria-label="Show desktop"><Desk /></button>
          <button aria-label="Media player"><Player /></button>
        </QuickLaunch>
        <Grip $h={18} />
        {tasks.map(([t, Icon, on]) => <TaskButton key={t} $on={on}><Icon />{t}</TaskButton>)}
        <Tray>
          <button aria-label="Show hidden icons">«</button>
          <Outlook /><Wave /><Shield /><Screens />
          <time>2:29 PM</time>
        </Tray>
      </TaskBar>
    </Window>
  );
}
